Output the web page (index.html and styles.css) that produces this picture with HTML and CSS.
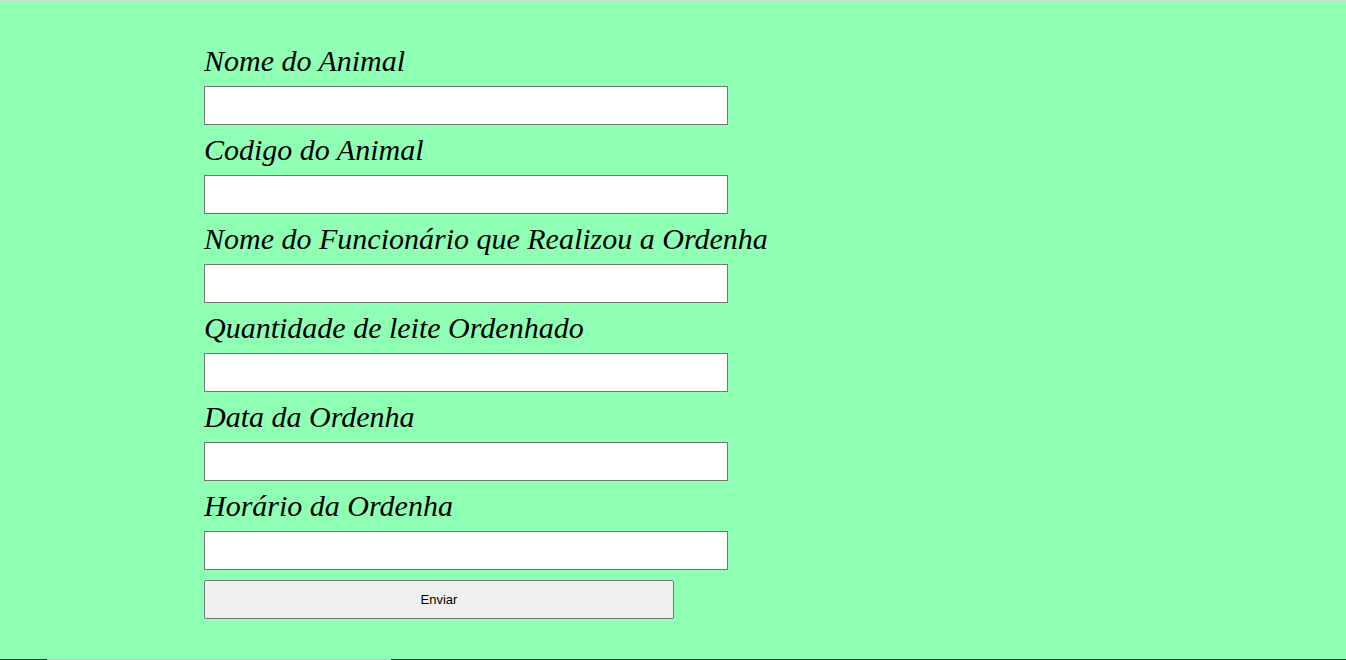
FILE: index.html
```html
<!DOCTYPE html>
<html lang="pt">
<head>
<meta charset="utf-8">
<title>Ordenha</title>
<link rel="stylesheet" href="styles.css">
</head>
<body>
<div class="page">
  <form class="form">
    <label class="field-label" for="nome">Nome do Animal</label>
    <input class="field-input" id="nome" type="text">
    <label class="field-label" for="codigo">Codigo do Animal</label>
    <input class="field-input" id="codigo" type="text">
    <label class="field-label" for="func">Nome do Funcionário que Realizou a Ordenha</label>
    <input class="field-input" id="func" type="text">
    <label class="field-label" for="qtd">Quantidade de leite Ordenhado</label>
    <input class="field-input" id="qtd" type="text">
    <label class="field-label" for="data">Data da Ordenha</label>
    <input class="field-input" id="data" type="text">
    <label class="field-label" for="hora">Horário da Ordenha</label>
    <input class="field-input" id="hora" type="text">
    <button class="submit" type="button">Enviar</button>
  </form>
</div>
<div class="footer"></div>
</body>
</html>
```
FILE: styles.css
```css
html, body {
  margin: 0;
  padding: 0;
}
body {
  background: #8fffb3;
  border-top: 1px solid #d9d9d9;
}
.page {
  padding: 35px 0 0 204px;
  height: 658px;
  box-sizing: border-box;
}
.form {
  display: flex;
  flex-direction: column;
  align-items: flex-start;
}
.field-label {
  display: block;
  font-family: "Liberation Serif", "Times New Roman", serif;
  font-style: italic;
  font-size: 30px;
  line-height: 50px;
  color: #000;
}
.field-input {
  display: block;
  box-sizing: border-box;
  width: 524px;
  height: 39px;
  margin: 0;
  border: 1px solid #767676;
  border-radius: 0;
  background: #fff;
  font-family: "Liberation Sans", Arial, sans-serif;
  font-size: 13px;
  padding: 1px 2px;
}
.submit {
  box-sizing: border-box;
  width: 470px;
  height: 39px;
  margin-top: 10px;
  border: 1px solid #767676;
  border-radius: 2px;
  background: #efefef;
  font-family: "Liberation Sans", Arial, sans-serif;
  font-size: 13px;
  color: #000;
}
.footer {
  height: 40px;
  background: linear-gradient(to right, #0b4030 0, #0b4030 47px, #c8c8c8 47px, #c8c8c8 391px, #0b4030 391px, #0b4030 100%);
}
```
